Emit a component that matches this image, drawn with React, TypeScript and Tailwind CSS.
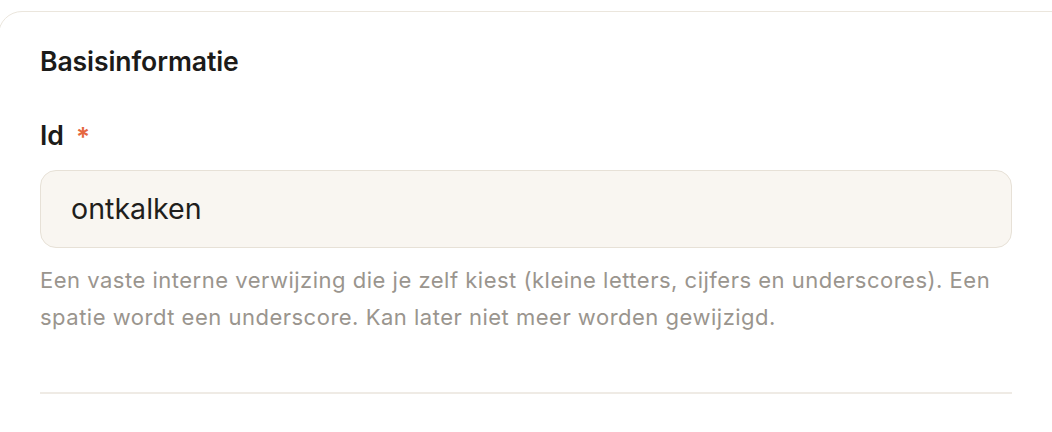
import React from "react";

export default function App() {
  return (
    <div className="w-[1052px] h-[432px] bg-white overflow-hidden pt-[11px] font-['Inter',sans-serif]">
      <div className="ml-[-2px] mr-[-40px] h-[460px] rounded-[24px] border border-[#ebe6dd] bg-white pl-[41px] pr-[79px] pt-[29px]">
        <h2 className="text-[26.6px] leading-[40px] font-semibold text-[#1c1b19] tracking-[-0.1px]">Basisinformatie</h2>
        <div className="mt-[35px] flex items-center h-[40px]">
          <span className="text-[26.6px] font-semibold text-[#1c1b19]">Id</span>
          <span className="ml-[12px] text-[26px] font-semibold text-[#e5673f]">*</span>
        </div>
        <div className="mt-[14px] h-[78px] rounded-[16px] border-[1.5px] border-[#e7e1d7] bg-[#f9f6f1] flex items-center pl-[30px]">
          <span className="text-[28.6px] text-[#1f1e1c]">ontkalken</span>
        </div>
        <p className="mt-[14px] text-[22px] leading-[37px] tracking-[0.5px] text-[#9a958e] w-[972px]">
          Een vaste interne verwijzing die je zelf kiest (kleine letters, cijfers en underscores). Een spatie wordt een underscore. Kan later niet meer worden gewijzigd.
        </p>
        <div className="mt-[56px] border-t-2 border-[#efebe5]" />
      </div>
    </div>
  );
}
